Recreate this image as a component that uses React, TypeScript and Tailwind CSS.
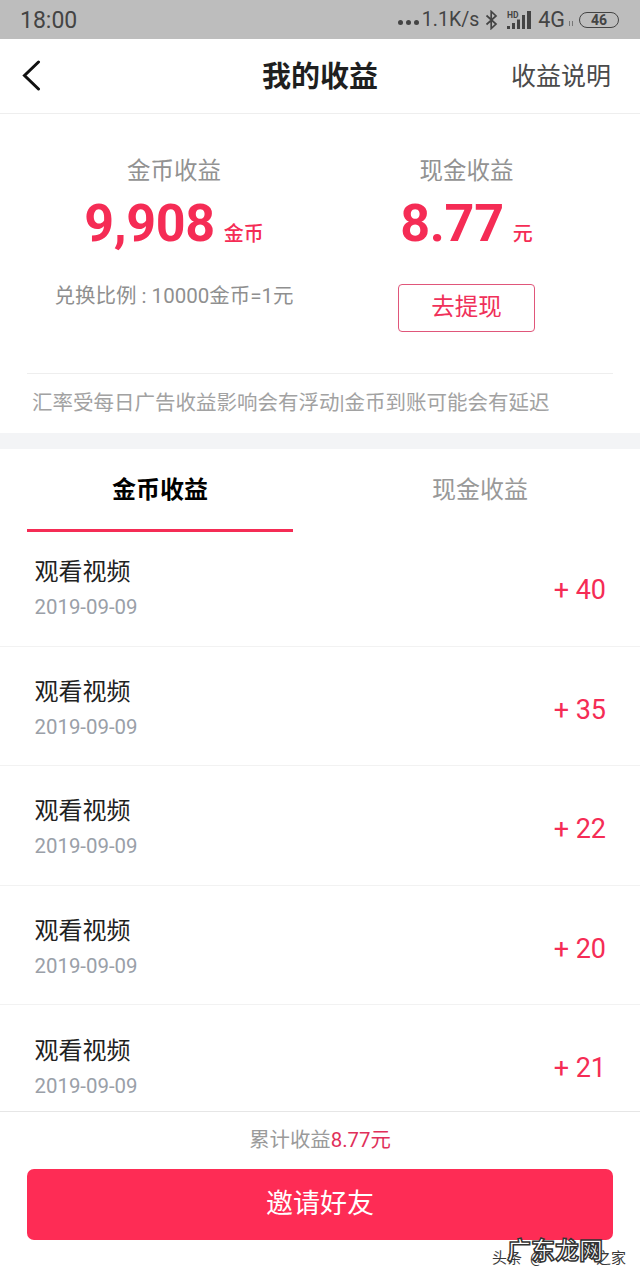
const CJK = "font-['Roboto','Noto_Sans_CJK_SC',sans-serif]";

const rows = [
  { label: "观看视频", date: "2019-09-09", amount: "+ 40" },
  { label: "观看视频", date: "2019-09-09", amount: "+ 35" },
  { label: "观看视频", date: "2019-09-09", amount: "+ 22" },
  { label: "观看视频", date: "2019-09-09", amount: "+ 20" },
  { label: "观看视频", date: "2019-09-09", amount: "+ 21" },
];

function StatusIcons() {
  return (
    <div className="flex items-center text-[#444444]">
      <div className="flex gap-[3px] mr-[3px] mt-[6px]">
        <span className="w-[5px] h-[5px] rounded-full bg-[#444444]" />
        <span className="w-[5px] h-[5px] rounded-full bg-[#444444]" />
        <span className="w-[5px] h-[5px] rounded-full bg-[#444444]" />
      </div>
      <span className="text-[19.5px] leading-none">1.1K/s</span>
      {/* bluetooth */}
      <svg width="13" height="20" viewBox="0 0 13 20" className="ml-[6px]" fill="none" stroke="#444444" strokeWidth="1.7">
        <path d="M1.5 5.5 11 14l-4.8 4.5V1.5L11 6 1.5 14.5" />
      </svg>
      {/* signal with HD */}
      <svg width="25" height="20" viewBox="0 0 25 20" className="ml-[9px]">
        <text x="0" y="7.5" fontSize="8.5" fontWeight="700" fill="#444444" fontFamily="Roboto">HD</text>
        <rect x="0" y="16" width="3" height="3" fill="#444444" />
        <rect x="5" y="13" width="3" height="6" fill="#444444" />
        <rect x="10" y="9.5" width="3" height="9.5" fill="#444444" />
        <rect x="15" y="5" width="3" height="14" fill="#444444" />
        <rect x="20" y="1" width="4" height="18" fill="#444444" />
      </svg>
      <span className="text-[21.5px] leading-none ml-[6px]">4G</span>
      <div className="flex items-end gap-[2px] ml-[4px] mt-[7px]">
        <span className="w-[1px] h-[5px] bg-[#777777]" />
        <span className="w-[1px] h-[5px] bg-[#777777]" />
      </div>
      <div className="ml-[6px] w-[40px] h-[16px] rounded-full border-[1.5px] border-[#444444] flex items-center justify-center text-[14px] font-bold leading-none">
        46
      </div>
    </div>
  );
}

export default function App() {
  return (
    <div className={`relative w-[640px] h-[1280px] bg-white flex flex-col overflow-hidden ${CJK}`}>
      {/* status bar */}
      <div className="h-[39px] shrink-0 bg-[#bdbdbd] flex items-center justify-between pl-[20px] pr-[21px]">
        <span className="mt-[1px] text-[23px] leading-none text-[#444444]">18:00</span>
        <StatusIcons />
      </div>

      {/* header */}
      <div className="h-[75px] shrink-0 relative flex items-center justify-between pl-[22px] pr-[29px] border-b border-[#eeeeee]">
        <svg width="19" height="31" viewBox="0 0 19 31" fill="none" stroke="#111111" strokeWidth="3" strokeLinecap="round" className="-mt-[2px]">
          <path d="M16.5 2 2.5 15.5l14 13.5" />
        </svg>
        <span className="absolute left-0 right-0 top-[16px] text-center text-[29px] leading-[44px] font-bold text-[#1f1f1f]">我的收益</span>
        <span className="mt-[2px] text-[25px] text-[#4a4a4a]">收益说明</span>
      </div>

      {/* summary */}
      <div className="h-[319px] shrink-0 px-[27px] flex flex-col">
        <div className="h-[259px] flex">
          <div className="w-[293px] flex flex-col items-center pl-[1px]">
            <span className="mt-[40px] text-[23.5px] leading-[34px] text-[#929292]">金币收益</span>
            <div className="mt-[5px] h-[62px] flex items-baseline text-[#f52c55] font-bold">
              <span className="text-[52px] leading-[62px] tracking-[-0.3px]">9,908</span>
              <span className="ml-[9px] text-[20px] font-medium">金币</span>
            </div>
            <span className="mt-[27px] text-[20.5px] leading-[28px] text-[#8f8f8f]">兑换比例 : 10000金币=1元</span>
          </div>
          <div className="flex-1 flex flex-col items-center">
            <span className="mt-[40px] text-[23.5px] leading-[34px] text-[#929292]">现金收益</span>
            <div className="mt-[5px] h-[62px] flex items-baseline text-[#f52c55] font-bold">
              <span className="text-[52px] leading-[62px] tracking-[-0.3px]">8.77</span>
              <span className="ml-[9px] text-[20px] font-medium">元</span>
            </div>
            <div className="mt-[29px] w-[137px] h-[48px] rounded-[4px] border border-[#e0567a] flex items-center justify-center text-[23.5px] text-[#f0305a]">
              去提现
            </div>
          </div>
        </div>
        <div className="border-t border-[#eeeeee] h-[60px] pl-[5px] flex items-center text-[20.5px] text-[#a2a2a2]">
          汇率受每日广告收益影响会有浮动|金币到账可能会有延迟
        </div>
      </div>

      <div className="h-[16px] shrink-0 bg-[#f3f4f6]" />

      {/* tabs */}
      <div className="h-[83px] shrink-0 px-[27px] flex justify-between">
        <div className="w-[266px] border-b-[3px] border-[#f52c55] flex justify-center pt-[23px] text-[24px] font-bold text-black">
          金币收益
        </div>
        <div className="w-[266px] flex justify-center pt-[23px] text-[24px] text-[#999999]">现金收益</div>
      </div>

      {/* list, first row sits 5px tighter under the tabs */}
      <div className="-mt-[5px] flex-1 min-h-0 overflow-hidden">
        {rows.map((row, i) => (
          <div key={i} className="h-[119.6px] pl-[34.5px] pr-[34px] border-b border-[#f2f2f2] flex items-center justify-between">
            <div className="pt-[5px] flex flex-col">
              <span className="text-[24px] leading-[34px] text-[#222222]">{row.label}</span>
              <span className="mt-[4px] text-[20.4px] leading-[29px] text-[#9aa0a8]">{row.date}</span>
            </div>
            <span className="pt-[8px] text-[27px] text-[#f52c55]">{row.amount}</span>
          </div>
        ))}
      </div>

      {/* footer */}
      <div className="h-[169px] shrink-0 bg-white border-t border-[#e6e6e6] px-[27px] flex flex-col items-center">
        <div className="mt-[13px] text-[20.4px] leading-[30px] text-[#9a9a9a]">
          累计收益<span className="text-[#e0305a]">8.77元</span>
        </div>
        <div className="mt-[14px] w-full h-[71px] rounded-[7px] bg-[#fe2c55] flex items-center justify-center text-[27px] text-white">
          邀请好友
        </div>
      </div>

      {/* watermark */}
      <div className="absolute left-[492px] top-[1249px] w-[134px] flex justify-between text-[15px] leading-[18px] text-[#3a3a3a]">
        <span>头条<span className="ml-[8px]">@</span></span>
        <span>之家</span>
        <span className="absolute left-[15px] top-[-11px] whitespace-nowrap text-[24px] leading-[26px] font-bold text-white [-webkit-text-stroke:1.5px_#333333]">广东龙网</span>
      </div>
    </div>
  );
}
